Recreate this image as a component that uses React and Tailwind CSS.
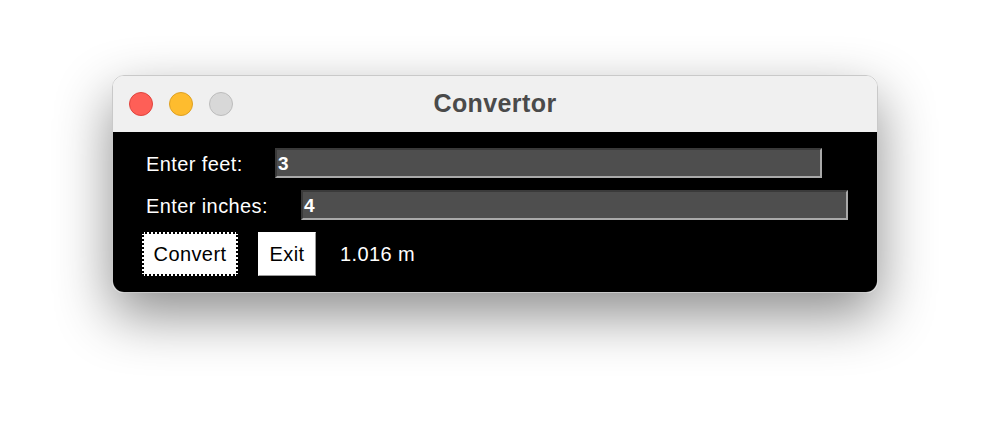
import React from 'react'

const Light = ({ color, border }) => (
  <span className={`block w-[24px] h-[24px] rounded-full border ${color} ${border}`} />
)

const Entry = ({ value }) => (
  <div className="w-[547px] h-[30px] bg-[#4e4e4e] border-2 border-t-[#3a3a3a] border-l-[#3a3a3a] border-b-[#a9a9a9] border-r-[#a9a9a9] flex items-center pl-[1px] text-white text-[19px] font-bold leading-none">
    {value}
  </div>
)

export default function App() {
  return (
    <div className="w-[990px] h-[440px] bg-white pt-[75px] pl-[112px] font-['Liberation_Sans',Arial,sans-serif]">
      <div className="w-[766px] h-[218px] rounded-[12px] overflow-hidden border border-[#c9c9c9] shadow-[0_22px_55px_rgba(0,0,0,0.45)] flex flex-col">

        {/* Title bar */}
        <div className="relative h-[56px] bg-[#f0f0f0] flex items-center pl-[16px] gap-[16px]">
          <Light color="bg-[#fe5f57]" border="border-[#e0443e]" />
          <Light color="bg-[#febc2e]" border="border-[#dea123]" />
          <Light color="bg-[#d8d8d8]" border="border-[#bdbdbd]" />
          <div className="absolute inset-0 flex items-center justify-center text-[25px] font-bold tracking-[0.4px] text-[#4a4a4a] pointer-events-none">
            Convertor
          </div>
        </div>

        {/* Body */}
        <div className="flex-1 bg-black pt-[16px] pl-[30px] text-white text-[20px] tracking-[0.4px]">
          <div className="flex items-center h-[30px]">
            <span className="w-[132px] pl-[3px] pt-[2px] leading-[28px]">Enter feet:</span>
            <Entry value="3" />
          </div>
          <div className="flex items-center h-[30px] mt-[12px]">
            <span className="w-[158px] pl-[3px] pt-[2px] leading-[28px]">Enter inches:</span>
            <Entry value="4" />
          </div>
          <div className="flex items-center mt-[12px] -ml-[1px]">
            <button className="w-[96px] h-[44px] bg-white text-black border-2 border-dotted border-black text-[20px] tracking-[0.4px]">
              Convert
            </button>
            <button className="ml-[20px] w-[58px] h-[44px] bg-white text-black border border-b-[#9a9a9a] border-r-[#9a9a9a] border-t-white border-l-white text-[20px] tracking-[0.4px]">
              Exit
            </button>
            <span className="ml-[24px]">1.016 m</span>
          </div>
        </div>

      </div>
    </div>
  )
}
